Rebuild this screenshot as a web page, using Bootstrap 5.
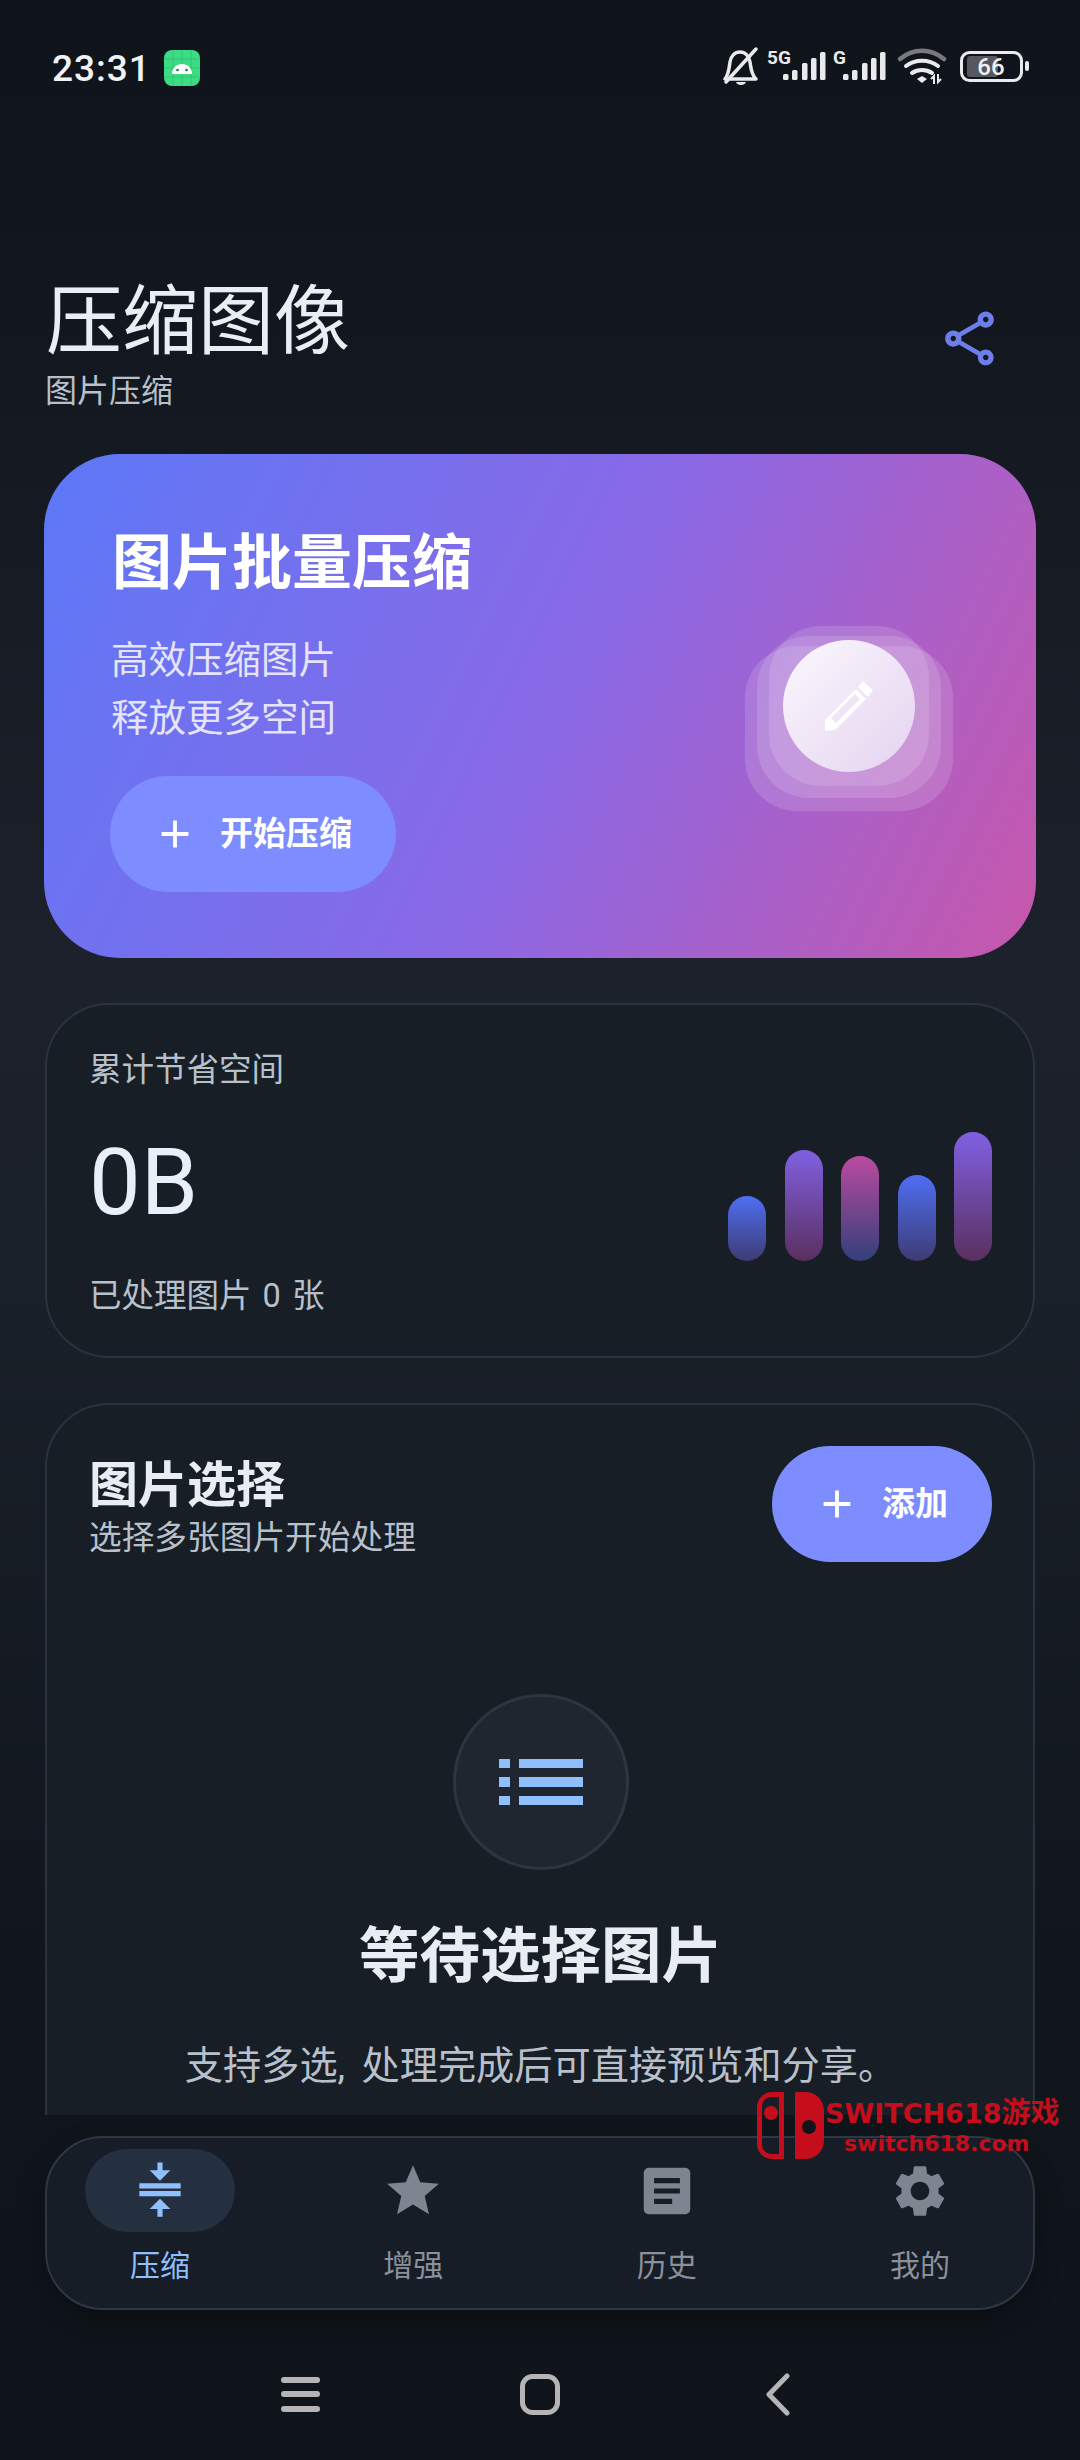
<!DOCTYPE html>
<html lang="zh-CN">
<head>
    <meta charset="UTF-8">
    <meta name="viewport" content="width=device-width, initial-scale=1.0">
    <title>压缩图像</title>
    <link href="https://cdn.jsdelivr.net/npm/bootstrap@5.3.0/dist/css/bootstrap.min.css" rel="stylesheet">
    <style>
        html, body { margin: 0; background: #10151c; }
        body { font-family: Roboto, "Noto Sans CJK SC", sans-serif; color: #e8edf5; }
        .phone { width: 1080px; height: 2460px; overflow: hidden; background: linear-gradient(180deg, #0f141b 0, #12171f 300px, #1c212b 960px, #1a2029 1300px, #11161d 1950px, #0f141a 2460px); }
        .status-row { height: 136px; padding: 0 51px 0 52px; }
        .status-time { font-size: 37px; line-height: 1; letter-spacing: 1px; font-weight: 500; color: #f0f2f5; margin-right: 13px; }
        .page-head { padding: 141px 44px 41px 45px; }
        .page-title { font-size: 76px; line-height: 90px; font-weight: 400; margin: 0 0 2px 1px; color: #e9eef6; }
        .page-sub { font-size: 32px; line-height: 44px; color: #b8c0cb; }
        .share-ico { width: 65px; height: 65px; fill: #6c7ee8; margin: 29px 34px 0 0; }
        .scroll-zone { height: 1661px; overflow: hidden; padding: 0 45px; gap: 45px; }

        .hero-box { flex-shrink: 0; height: 504px; margin: 0 -1px; border-radius: 76px; padding: 72px 83px 0 65px; background: linear-gradient(116deg, #5c78f7 0%, #8a69e6 52%, #c857ab 100%); }
        .hero-title { font-size: 60px; line-height: 76px; font-weight: 700; color: #fff; margin: 0 0 29px 3px; }
        .hero-text { font-size: 37.5px; line-height: 58px; color: #e6e4fb; margin-left: 2px; }
        .btn-accent { height: 116px; border: 0; border-radius: 58px; background: #7d8cff; color: #fff; font-size: 33px; font-weight: 700; padding: 0 44px 0 42px; gap: 22px; }
        .btn-accent:hover { background: #7d8cff; color: #fff; }
        .btn-accent svg { width: 46px; height: 46px; fill: #fff; }
        .hero-start { margin-top: 29px; margin-left: 1px; }
        .hero-art { width: 208px; height: 185px; margin-top: 100px; }
        .art-layer { position: absolute; background: rgba(255, 255, 255, .14); border-radius: 52px; }
        .art-a { left: 0; top: 20px; width: 208px; height: 165px; }
        .art-b { left: 12px; top: 10px; width: 184px; height: 162px; }
        .art-c { left: 24px; top: 0; width: 160px; height: 160px; }
        .art-disc { position: absolute; left: 38px; top: 14px; width: 132px; height: 132px; border-radius: 50%; background: linear-gradient(135deg, #fbf8fe, #e4d3ef); }
        .art-disc svg { width: 50px; height: 50px; fill: #fff; }

        .panel-box { flex-shrink: 0; background: #171e26; border: 2px solid #2a323e; border-radius: 64px; color: #e8edf5; }
        .stat-box { height: 355px; padding: 43px 41px 0 42px; }
        .stat-label { font-size: 32.5px; line-height: 44px; color: #b8c0cb; }
        .stat-count { word-spacing: 3px; }
        .stat-value { font-size: 92px; line-height: 100px; margin: 41px 0 41px; font-weight: 400; color: #e8eff8; }
        .bar-group { gap: 18.5px; height: 129px; margin-top: 84px; }
        .bar-item { width: 38px; border-radius: 19px; }
        .bar-blue { background: linear-gradient(180deg, #4f6ef2, #3d3b73); }
        .bar-violet { background: linear-gradient(180deg, #8060e2, #5a2f5e); }
        .bar-pink { background: linear-gradient(180deg, #bb4aa0, #32407a); }

        .pick-box { min-height: 900px; padding: 41px 41px 0 42px; }
        .pick-title { font-size: 49px; line-height: 60px; font-weight: 700; margin: 10px 0 0; color: #e8edf5; }
        .pick-sub { font-size: 32.7px; line-height: 44px; color: #b8c0cb; }
        .btn-add { width: 220px; }
        .empty-ring { width: 176px; height: 176px; border-radius: 50%; border: 3px solid #2d3541; background: #20262f; margin-top: 132px; }
        .empty-ring svg { width: 84px; height: 46px; fill: #90bfff; }
        .empty-title { font-size: 60.5px; line-height: 76px; font-weight: 700; margin: 49px 0 43px; color: #e8edf5; }
        .empty-text { font-size: 38.2px; line-height: 56px; color: #b8c0cb; word-spacing: 7px; }

        .tab-shell { height: 174px; margin: 21px 45px 0; padding: 11px 38px 0; background: #171d26; border: 2px solid #2f3742; border-radius: 58px; box-shadow: 0 10px 26px rgba(0, 0, 0, .3); }
        .tab-item { width: 150px; color: #8a919b; font-size: 30px; line-height: 40px; }
        .tab-pill { width: 150px; height: 83px; border-radius: 42px; margin-bottom: 14px; }
        .tab-pill svg { width: 62px; height: 62px; fill: #7d8590; }
        .tab-on { color: #90bfff; }
        .tab-on .tab-pill { background: #24303f; }
        .tab-on .tab-pill svg { fill: #90bfff; }

        .sys-nav { height: 149px; padding: 18px 20px 0 0; }
        .sys-nav svg { display: block; }
        .stamp { position: absolute; left: 757px; top: 2092px; color: #c50d1c; }
        .stamp svg { width: 67px; height: 67px; fill: #c50d1c; margin-right: 1px; }
        .stamp-a { font-family: "DejaVu Sans", "Noto Sans CJK SC", sans-serif; font-weight: 700; font-size: 27px; line-height: 36px; white-space: nowrap; }
        .stamp-a span { font-family: "Noto Sans CJK SC", sans-serif; font-size: 29px; }
        .stamp-b { font-family: "DejaVu Sans", sans-serif; font-weight: 700; font-size: 22px; line-height: 24px; margin: 0 0 0 19px; white-space: nowrap; }
    </style>
</head>
<body>
    <div class="phone position-relative d-flex flex-column">
        <!-- status bar -->
        <div class="status-row d-flex align-items-center">
            <span class="status-time">23:31</span>
            <svg width="36" height="36" viewBox="0 0 36 36" aria-hidden="true">
                <rect width="36" height="36" rx="8" fill="#3ddc84"/>
                <path d="M9 0v36M18 0v36M27 0v36M0 9h36M0 18h36M0 27h36" stroke="#2fc573" stroke-width="1"/>
                <path d="M8 24c0-6 4.500-10 10-10s10 4 10 10z" fill="#fff"/>
                <circle cx="13.500" cy="20" r="1.300" fill="#2a6b4a"/><circle cx="22.500" cy="20" r="1.300" fill="#2a6b4a"/>
            </svg>
            <svg class="ms-auto" width="306" height="44" viewBox="723 48 306 44" aria-hidden="true">
                <g fill="none" stroke="#e9eaec" stroke-width="3.500" stroke-linecap="round" stroke-linejoin="round">
                    <path d="M725 81h31c-5-5-5-11-6-17-1-6-5-10-10-10s-9 4-10 10c-1 6-1 12-5 17z"/>
                    <path d="M726 84L756 51"/>
                </g>
                <path d="M736 84h10c-1 4-9 4-10 0z" fill="#e9eaec"/>
                <text x="767" y="66" font-family="Roboto, sans-serif" font-weight="700" font-size="19" fill="#e9eaec">5G</text>
                <text x="833" y="66" font-family="Roboto, sans-serif" font-weight="700" font-size="19" fill="#e9eaec">G</text>
                <g fill="#e9eaec">
                    <rect x="783" y="76" width="5.500" height="6" rx="1.500"/><rect x="792" y="72" width="5.500" height="10" rx="1.500"/><rect x="802" y="65" width="5.500" height="17" rx="1.500"/><rect x="811" y="60" width="5.500" height="22" rx="1.500"/><rect x="820" y="54" width="5.500" height="28" rx="1.500"/>
                    <rect x="843" y="76" width="5.500" height="6" rx="1.500"/><rect x="852" y="72" width="5.500" height="10" rx="1.500"/><rect x="862" y="65" width="5.500" height="17" rx="1.500"/><rect x="871" y="60" width="5.500" height="22" rx="1.500"/><rect x="880" y="54" width="5.500" height="28" rx="1.500"/>
                </g>
                <g fill="none" stroke-linecap="round">
                    <path d="M900 61c13-11 31-11 44 0" stroke="#77797e" stroke-width="4.500"/>
                    <path d="M906 68c9-7 23-7 32 0" stroke="#e9eaec" stroke-width="4"/>
                    <path d="M912 75c6-4 14-4 20 0" stroke="#e9eaec" stroke-width="4"/>
                </g>
                <path d="M922 78l5 3-5 4-5-4z" fill="#e9eaec"/>
                <path d="M934 86v-8l-3 3M938 76v8l3-3" fill="none" stroke="#e9eaec" stroke-width="2"/>
                <rect x="961.500" y="54.500" width="60" height="28" rx="8" fill="none" stroke="#e9eaec" stroke-width="3"/>
                <rect x="967" y="58" width="31" height="21" rx="3" fill="#55585f"/>
                <rect x="1025" y="63" width="4" height="10" rx="2" fill="#e9eaec"/>
                <text x="991" y="77" text-anchor="middle" font-family="Roboto, sans-serif" font-weight="500" font-size="24" fill="#f0f0f2">66</text>
            </svg>
        </div>

        <!-- header -->
        <div class="page-head d-flex justify-content-between align-items-start">
            <div>
                <h1 class="page-title">压缩图像</h1>
                <div class="page-sub">图片压缩</div>
            </div>
            <svg class="share-ico" viewBox="0 0 24 24" aria-hidden="true"><path d="M18 16.080c-.76 0-1.440.3-1.960.77L8.910 12.700c.05-.23.09-.46.09-.7s-.04-.47-.09-.7l7.050-4.110c.54.5 1.250.81 2.040.81 1.660 0 3-1.340 3-3s-1.340-3-3-3-3 1.340-3 3c0 .24.04.47.09.7L8.040 9.810C7.500 9.310 6.790 9 6 9c-1.660 0-3 1.340-3 3s1.340 3 3 3c.79 0 1.500-.31 2.040-.81l7.120 4.160c-.05.21-.08.43-.08.65 0 1.610 1.310 2.920 2.920 2.920s2.920-1.310 2.920-2.920c0-1.610-1.310-2.920-2.920-2.920zM18 4c.55 0 1 .45 1 1s-.45 1-1 1-1-.45-1-1 .45-1 1-1zM6 13c-.55 0-1-.45-1-1s.45-1 1-1 1 .45 1 1-.45 1-1 1zm12 7.020c-.55 0-1-.45-1-1s.45-1 1-1 1 .45 1 1-.45 1-1 1z"/></svg>
        </div>

        <!-- scrolling content, cut off above the tab bar -->
        <div class="scroll-zone d-flex flex-column">
            <div class="hero-box d-flex justify-content-between align-items-start">
                <div>
                    <h2 class="hero-title">图片批量压缩</h2>
                    <div class="hero-text">高效压缩图片<br>释放更多空间</div>
                    <button type="button" class="btn btn-accent hero-start d-inline-flex align-items-center">
                        <svg viewBox="0 0 24 24" aria-hidden="true"><path d="M19 13h-6v6h-2v-6H5v-2h6V5h2v6h6z"/></svg>开始压缩
                    </button>
                </div>
                <div class="hero-art position-relative">
                    <div class="art-layer art-a"></div>
                    <div class="art-layer art-b"></div>
                    <div class="art-layer art-c"></div>
                    <div class="art-disc d-flex align-items-center justify-content-center">
                        <svg viewBox="0 0 50 50" aria-hidden="true"><path fill-rule="evenodd" d="M32 8L42 18 11 49 1 50 1 39zM31 13L7 37l5 5 24-24zM39 0l10 9-5 7-10-10z"/></svg>
                    </div>
                </div>
            </div>

            <div class="panel-box stat-box d-flex justify-content-between align-items-start">
                <div>
                    <div class="stat-label">累计节省空间</div>
                    <div class="stat-value">0B</div>
                    <div class="stat-label stat-count">已处理图片 0 张</div>
                </div>
                <div class="bar-group d-flex align-items-end">
                    <div class="bar-item bar-blue" style="height: 65px"></div>
                    <div class="bar-item bar-violet" style="height: 111px"></div>
                    <div class="bar-item bar-pink" style="height: 105px"></div>
                    <div class="bar-item bar-blue" style="height: 86px"></div>
                    <div class="bar-item bar-violet" style="height: 129px"></div>
                </div>
            </div>

            <div class="panel-box pick-box">
                <div class="d-flex justify-content-between align-items-start">
                    <div>
                        <h2 class="pick-title">图片选择</h2>
                        <div class="pick-sub">选择多张图片开始处理</div>
                    </div>
                    <button type="button" class="btn btn-accent btn-add d-flex align-items-center">
                        <svg viewBox="0 0 24 24" aria-hidden="true"><path d="M19 13h-6v6h-2v-6H5v-2h6V5h2v6h6z"/></svg>添加
                    </button>
                </div>
                <div class="d-flex flex-column align-items-center text-center">
                    <div class="empty-ring d-flex align-items-center justify-content-center">
                        <svg viewBox="0 0 84 46" aria-hidden="true"><path d="M0 0h11v9H0zM20 0h64v9H20zM0 18h11v10H0zM20 18h64v10H20zM0 37h11v9H0zM20 37h64v9H20z"/></svg>
                    </div>
                    <div class="empty-title">等待选择图片</div>
                    <div class="empty-text">支持多选, 处理完成后可直接预览和分享。</div>
                </div>
            </div>
        </div>

        <!-- tab bar -->
        <nav class="tab-shell d-flex justify-content-between">
            <div class="tab-item tab-on d-flex flex-column align-items-center">
                <div class="tab-pill d-flex align-items-center justify-content-center">
                    <svg viewBox="0 0 24 24" aria-hidden="true"><path d="M8 19h3v3h2v-3h3l-4-4-4 4zm8-15h-3V1h-2v3H8l4 4 4-4zM4 9v2h16V9H4zm0 3h16v2H4v-2z"/></svg>
                </div>压缩
            </div>
            <div class="tab-item d-flex flex-column align-items-center">
                <div class="tab-pill d-flex align-items-center justify-content-center">
                    <svg viewBox="0 0 24 24" aria-hidden="true"><path d="M12 17.270L18.180 21l-1.640-7.030L22 9.240l-7.190-.61L12 2 9.190 8.630 2 9.240l5.460 4.730L5.820 21z"/></svg>
                </div>增强
            </div>
            <div class="tab-item d-flex flex-column align-items-center">
                <div class="tab-pill d-flex align-items-center justify-content-center">
                    <svg viewBox="0 0 24 24" aria-hidden="true"><path d="M19 3H5c-1.100 0-2 .9-2 2v14c0 1.100.9 2 2 2h14c1.100 0 2-.9 2-2V5c0-1.100-.9-2-2-2zm-5 14H7v-2h7v2zm3-4H7v-2h10v2zm0-4H7V7h10v2z"/></svg>
                </div>历史
            </div>
            <div class="tab-item d-flex flex-column align-items-center">
                <div class="tab-pill d-flex align-items-center justify-content-center">
                    <svg viewBox="0 0 24 24" aria-hidden="true"><path d="M19.140 12.940c.04-.3.06-.61.06-.94 0-.32-.02-.64-.07-.94l2.030-1.580c.18-.14.23-.41.12-.61l-1.920-3.320c-.12-.22-.37-.29-.59-.22l-2.390.96c-.5-.38-1.030-.7-1.620-.94L14.400 2.810c-.04-.24-.24-.41-.48-.41h-3.840c-.24 0-.43.17-.47.41L9.250 5.350c-.59.24-1.130.57-1.620.94l-2.390-.96c-.22-.08-.47 0-.59.22L2.740 8.870c-.12.21-.08.47.12.61l2.030 1.580c-.05.3-.09.63-.09.94s.02.64.07.94l-2.030 1.580c-.18.14-.23.41-.12.61l1.920 3.320c.12.22.37.29.59.22l2.390-.96c.5.38 1.030.7 1.620.94l.36 2.540c.05.24.24.41.48.41h3.840c.24 0 .44-.17.47-.41l.36-2.540c.59-.24 1.130-.56 1.620-.94l2.390.96c.22.08.47 0 .59-.22l1.920-3.320c.12-.22.07-.47-.12-.61l-2.010-1.580zM12 15.600c-1.980 0-3.600-1.620-3.600-3.600s1.620-3.600 3.600-3.600 3.600 1.620 3.600 3.600-1.620 3.600-3.600 3.600z"/></svg>
                </div>我的
            </div>
        </nav>

        <!-- system navigation -->
        <div class="sys-nav d-flex align-items-center justify-content-center">
            <svg width="560" height="44" viewBox="0 0 560 44" aria-hidden="true">
                <g fill="#b5b5b5"><rect x="31" y="5" width="39" height="6" rx="3"/><rect x="31" y="19" width="39" height="6" rx="3"/><rect x="31" y="34" width="39" height="6" rx="3"/></g>
                <rect x="272.500" y="4.500" width="35" height="36" rx="10" fill="none" stroke="#b5b5b5" stroke-width="5"/>
                <path d="M537 4L519 22.500 537 41" fill="none" stroke="#b5b5b5" stroke-width="5" stroke-linecap="round" stroke-linejoin="round"/>
            </svg>
        </div>

        <!-- watermark -->
        <div class="stamp d-flex">
            <svg viewBox="0 0 67 67" aria-hidden="true"><path fill-rule="evenodd" d="M27 0v67H15C7 67 0 60 0 52V15C0 7 7 0 15 0zM22 5h-7C9 5 5 9 5 15v37c0 6 4 10 10 10h7zM14 14a7 7 0 1 0 0 14 7 7 0 0 0 0-14zM38 0h10c11 0 19 8 19 19v29c0 11-8 19-19 19H38zM52 28a7 7 0 1 0 0 14 7 7 0 0 0 0-14z"/></svg>
            <div>
                <div class="stamp-a">SWITCH618<span>游戏</span></div>
                <div class="stamp-b">switch618.com</div>
            </div>
        </div>
    </div>
    <script src="https://cdn.jsdelivr.net/npm/bootstrap@5.3.0/dist/js/bootstrap.bundle.min.js"></script>
</body>
</html>
